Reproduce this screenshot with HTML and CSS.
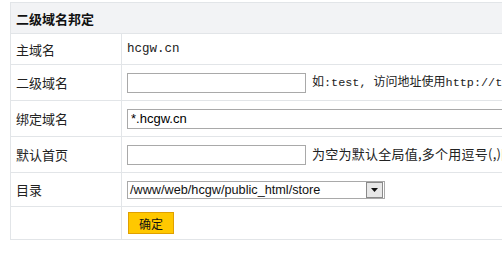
FILE: index.html
```html
<!DOCTYPE html>
<html lang="zh-CN">
<head>
    <meta charset="UTF-8">
    <title>二级域名邦定</title>
    <link rel="stylesheet" href="styles.css">
</head>
<body>
    <table class="bind">
        <tr class="head">
            <th colspan="2">二级域名邦定</th>
        </tr>
        <tr class="r1">
            <td class="label">主域名</td>
            <td class="mono">hcgw.cn</td>
        </tr>
        <tr>
            <td class="label">二级域名</td>
            <td><input class="short" type="text"><span class="tip small">如<span class="mono">:test, </span>访问地址使用<span class="mono">http://test.hcgw.cn</span></span></td>
        </tr>
        <tr>
            <td class="label">绑定域名</td>
            <td><input class="long" type="text" value="*.hcgw.cn"></td>
        </tr>
        <tr>
            <td class="label">默认首页</td>
            <td><input class="short" type="text"><span class="tip wide">为空为默认全局值,多个用逗号(,)隔开</span></td>
        </tr>
        <tr class="r5">
            <td class="label">目录</td>
            <td>
                <div class="select">
                    <span class="val">/www/web/hcgw/public_html/store</span>
                    <span class="arrow"><svg width="7" height="4" viewBox="0 0 7 4"><path d="M0 0h7L3.5 4z" fill="#111"/></svg></span>
                </div>
            </td>
        </tr>
        <tr class="r6">
            <td class="label"></td>
            <td><button class="ok">确定</button></td>
        </tr>
    </table>
</body>
</html>
```

FILE: styles.css
```css
html, body {
    overflow: hidden;
}
body {
    margin: 2px 0 0 10px;
    font-family: "Noto Sans CJK SC", sans-serif;
    font-size: 12px;
    color: #222;
    background: #fff;
}

.bind {
    border-collapse: collapse;
    width: 640px;
}
.bind th, .bind td {
    border: 1px solid #e2e5e8;
    padding: 0 5px;
    height: 35px;
    white-space: nowrap;
    text-align: left;
}
.bind .head th {
    background: #f2f3f5;
    height: 30px;
    font-size: 13px;
    font-weight: bold;
    color: #111;
}
.bind .r1 td {
    height: 30px;
}
.bind .r5 td {
    height: 33px;
}
.bind .r6 td {
    height: 32px;
}
.bind td.label {
    width: 100px;
    font-size: 13px;
    color: #222;
}

.mono {
    font-family: "Liberation Mono", monospace;
    font-size: 12.5px;
    color: #222;
}
.tip {
    margin-left: 6px;
    font-size: 13px;
    color: #222;
}
.tip.small {
    font-size: 12px;
}
.tip.wide {
    letter-spacing: 0.25px;
}
.tip .mono {
    font-size: 11.8px;
}

input {
    font-family: "Liberation Sans", sans-serif;
    font-size: 13px;
    height: 20px;
    box-sizing: border-box;
    border: 1px solid #a9a9a9;
    padding: 0 3px;
    margin: 0;
    vertical-align: middle;
    outline: none;
}
input.short {
    width: 179px;
}
input.long {
    width: 420px;
}

.select {
    display: flex;
    align-items: center;
    width: 258px;
    height: 18px;
    box-sizing: border-box;
    border: 1px solid #a9a9a9;
    font-family: "Liberation Sans", sans-serif;
    font-size: 12.7px;
    color: #111;
}
.select .val {
    flex: 1;
    padding-left: 2px;
}
.select .arrow {
    display: flex;
    align-items: center;
    justify-content: center;
    width: 15px;
    height: 14px;
    margin-right: 1px;
    border: 1px solid #8a8a8a;
    background: #e8e8e8;
}

.ok {
    margin-left: 1px;
    width: 46px;
    height: 22px;
    background: #ffc800;
    border: 1px solid #e0a000;
    font-family: "Noto Sans CJK SC", sans-serif;
    font-size: 12px;
    color: #111;
    padding: 0;
}
```
